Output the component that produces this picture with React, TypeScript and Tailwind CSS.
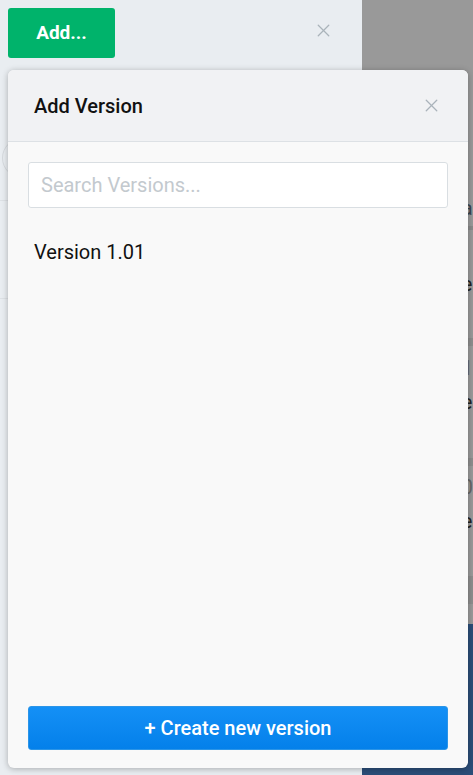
import { X } from "lucide-react";

const font = { fontFamily: "Roboto, 'Liberation Sans', sans-serif" };

/** Rows of the table that sits behind the dimmed overlay; only their right edge shows. */
function BackdropRows() {
  return (
    <div className="flex h-full flex-col">
      <div className="h-[190px]" />
      <div className="flex h-[36px] items-center pl-[100px] text-[20px] text-[#3a4450]">a</div>
      <div className="h-[4px] bg-[#8a8a8a]" />
      <div className="flex h-[108px] flex-col justify-center gap-1 pl-[100px] text-[20px] text-[#222]">
        <span className="text-[#666]">I</span>
        <span>e</span>
        <span className="text-[#777]">:</span>
      </div>
      <div className="h-[8px] bg-[#8d8d8d]" />
      <div className="flex h-[112px] flex-col justify-center gap-1 pl-[100px] text-[20px] text-[#222]">
        <span className="text-[#666]">1</span>
        <span>e</span>
        <span className="text-[#777]">:</span>
      </div>
      <div className="h-[8px] bg-[#8d8d8d]" />
      <div className="flex h-[110px] flex-col justify-center gap-1 pl-[100px] text-[20px] text-[#222]">
        <span className="text-[#666]">0</span>
        <span>e</span>
        <span className="text-[#777]">:</span>
      </div>
      <div className="h-[28px] bg-[#8d8d8d]" />
      <div className="h-[20px]" />
      <div className="flex-1 bg-[#2b4d78]" />
    </div>
  );
}

function AddVersionPopover() {
  return (
    <div className="absolute left-[8px] top-[70px] flex h-[698px] w-[460px] flex-col overflow-hidden rounded-[6px] bg-[#f9f9f9] shadow-[0_1px_6px_rgba(0,0,0,0.28)]">
      <div className="flex h-[72px] shrink-0 items-center justify-between border-b border-[#dde1e5] bg-[#f1f2f4] pl-[26px] pr-[26px]">
        <h2 className="text-[20px] font-medium text-[#111]">Add Version</h2>
        <X size={21} strokeWidth={1.5} className="text-[#aab3ba]" />
      </div>
      <div className="flex flex-1 flex-col px-[20px] pb-[18px] pt-[20px]">
        <input
          placeholder="Search Versions..."
          className="h-[46px] w-full rounded-[3px] border border-[#d9dee2] bg-white px-[12px] text-[20px] outline-none placeholder:text-[#c3c9ce]"
          style={font}
        />
        <div className="mt-[31px] pl-[6px] text-[20px] leading-[26px] text-[#111]">Version 1.01</div>
        <div className="flex-1" />
        <button className="h-[44px] w-full rounded-[3px] border border-[#2b95e8] bg-gradient-to-b from-[#1490f6] to-[#0480ea] text-[20px] font-medium text-white">
          + Create new version
        </button>
      </div>
    </div>
  );
}

export default function App() {
  return (
    <div className="relative flex h-[775px] w-[473px] overflow-hidden" style={font}>
      <div className="flex w-[364px] flex-col bg-[#e9edf1]">
        <div className="flex items-start justify-between pl-[8px] pr-[28px] pt-[8px]">
          <button className="h-[50px] w-[107px] rounded-[3px] bg-[#00b36b] text-[19px] font-bold text-white">
            Add...
          </button>
          <X size={21} strokeWidth={1.5} className="mt-[12px] text-[#aab3ba]" />
        </div>
        <div className="mt-[80px] ml-[2px] h-[40px] w-[40px] rounded-full border border-[#d6dade]" />
        <div className="mt-[22px] h-px bg-[#dde1e5]" />
        <div className="mt-[97px] h-px bg-[#dde1e5]" />
      </div>
      <div className="flex-1 bg-[#999999]">
        <BackdropRows />
      </div>
      <AddVersionPopover />
    </div>
  );
}
